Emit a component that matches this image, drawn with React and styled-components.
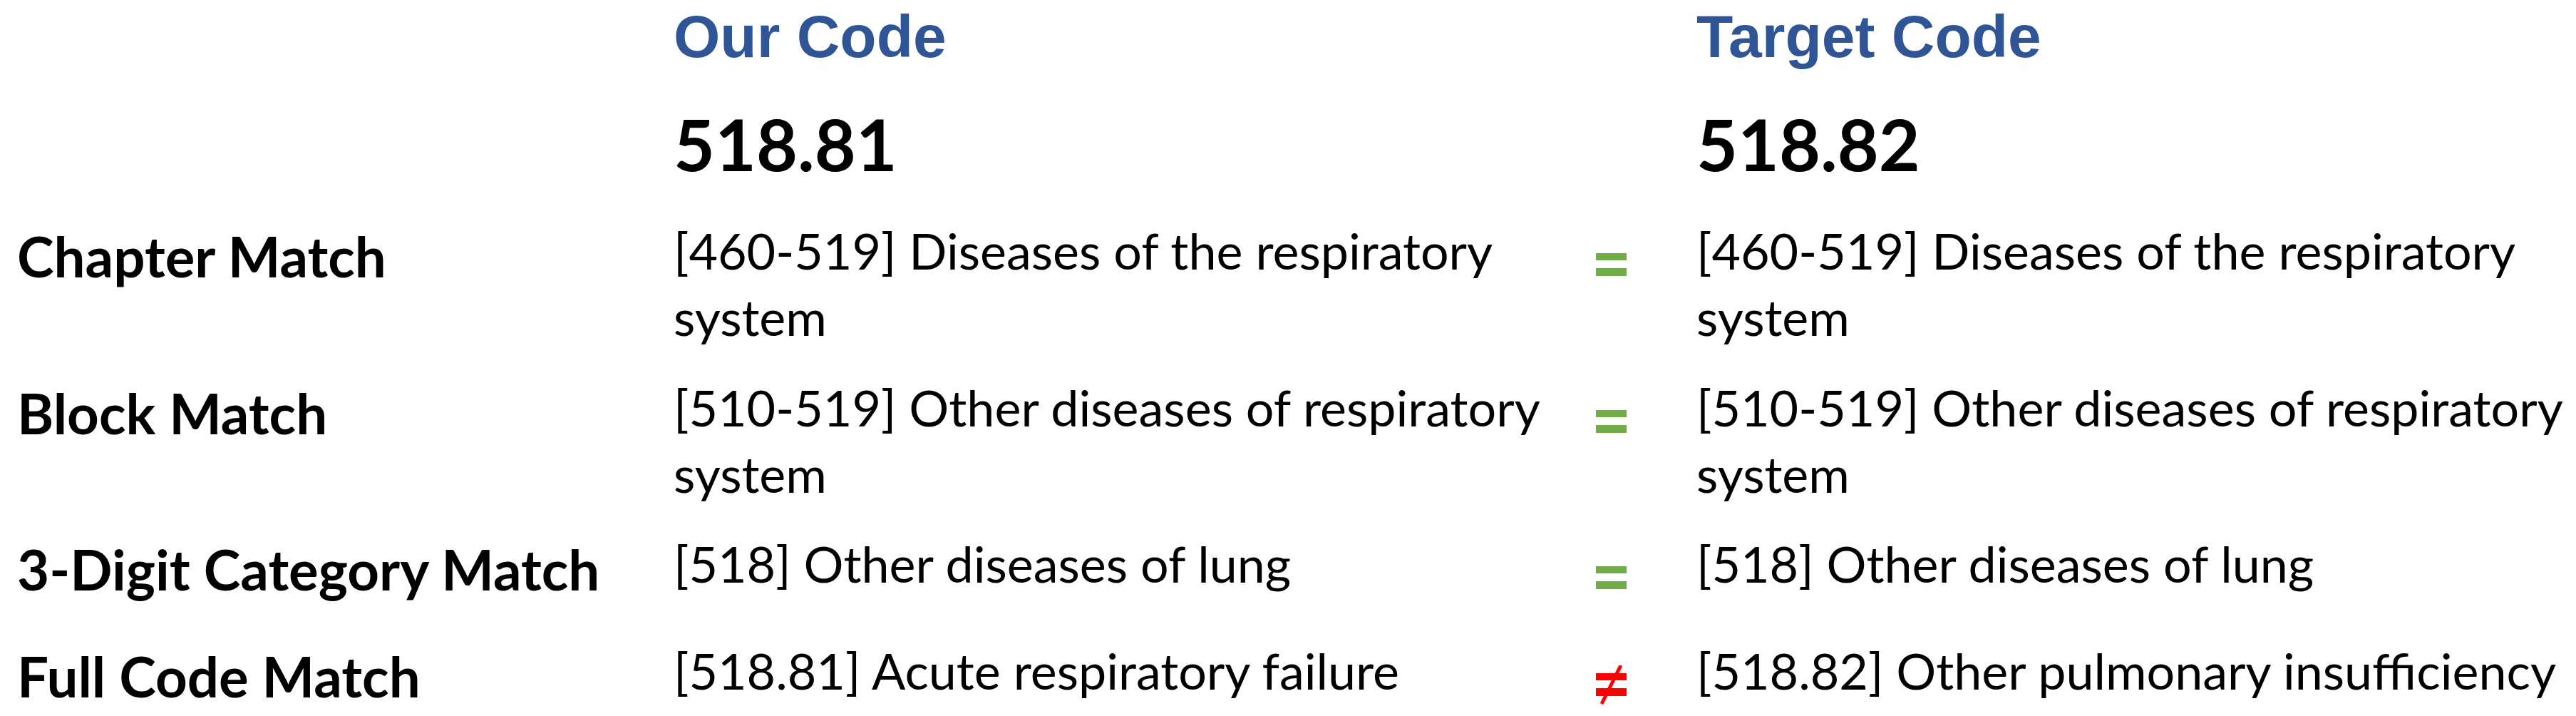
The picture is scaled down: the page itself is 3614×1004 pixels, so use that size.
import React from "react";
import styled, { createGlobalStyle } from "styled-components";

const rows = [
  {
    label: "Chapter Match",
    ours: "[460-519] Diseases of the respiratory\nsystem",
    target: "[460-519] Diseases of the respiratory\nsystem",
    same: true,
    height: 220,
  },
  {
    label: "Block Match",
    ours: "[510-519] Other diseases of respiratory\nsystem",
    target: "[510-519] Other diseases of respiratory\nsystem",
    same: true,
    height: 219,
  },
  {
    label: "3-Digit Category Match",
    ours: "[518] Other diseases of lung",
    target: "[518] Other diseases of lung",
    same: true,
    height: 150,
  },
  {
    label: "Full Code Match",
    ours: "[518.81] Acute respiratory failure",
    target: "[518.82] Other pulmonary insufficiency",
    same: false,
    height: 111,
  },
];

function Sign({ same }) {
  return (
    <SignBox>
      <svg width="44" height="56" viewBox="0 0 44 56">
        <g fill={same ? "#70ad47" : "#ff0000"}>
          <rect x="0" y="11" width="43" height="10" />
          <rect x="0" y="32" width="43" height="11" />
        </g>
        {!same && (
          <line x1="35" y1="0" x2="8" y2="54" stroke="#ff0000" strokeWidth="5" />
        )}
      </svg>
    </SignBox>
  );
}

function App() {
  return (
    <>
      <GlobalStyle />
      <Page>
        <Row $h={153}>
          <span />
          <Title>Our Code</Title>
          <span />
          <Title>Target Code</Title>
        </Row>
        <Row $h={151}>
          <span />
          <Code>518.81</Code>
          <span />
          <Code>518.82</Code>
        </Row>
        {rows.map((r) => (
          <Row key={r.label} $h={r.height}>
            <Label>{r.label}</Label>
            <Desc>{r.ours}</Desc>
            <Sign same={r.same} />
            <Desc>{r.target}</Desc>
          </Row>
        ))}
      </Page>
    </>
  );
}

export default App;

const GlobalStyle = createGlobalStyle`
  body {
    margin: 0;
    background: #ffffff;
    color: #000000;
    font-family: Lato, "Open Sans", sans-serif;
  }
`;

const Page = styled.div`
  width: 3614px;
  height: 1004px;
  overflow: hidden;
`;

const Row = styled.div`
  display: grid;
  grid-template-columns: 945px 1294px 141px 1fr;
  height: ${(p) => p.$h}px;
`;

const Title = styled.div`
  font-family: "Liberation Sans", Arial, sans-serif;
  font-weight: 700;
  font-size: 84px;
  line-height: 84px;
  padding-top: 9px;
  color: #2f5597;
  white-space: nowrap;
`;

const Code = styled.div`
  font-weight: 700;
  font-size: 100px;
  line-height: 100px;
  margin-top: -2px;
  white-space: nowrap;
`;

const Label = styled.div`
  font-weight: 700;
  font-size: 78px;
  line-height: 110px;
  padding-left: 24px;
  white-space: nowrap;
`;

const Desc = styled.div`
  font-size: 70px;
  line-height: 93px;
  padding-top: 1px;
  white-space: pre-line;
`;

const SignBox = styled.div`
  padding-top: 40px;
  svg {
    display: block;
  }
`;
